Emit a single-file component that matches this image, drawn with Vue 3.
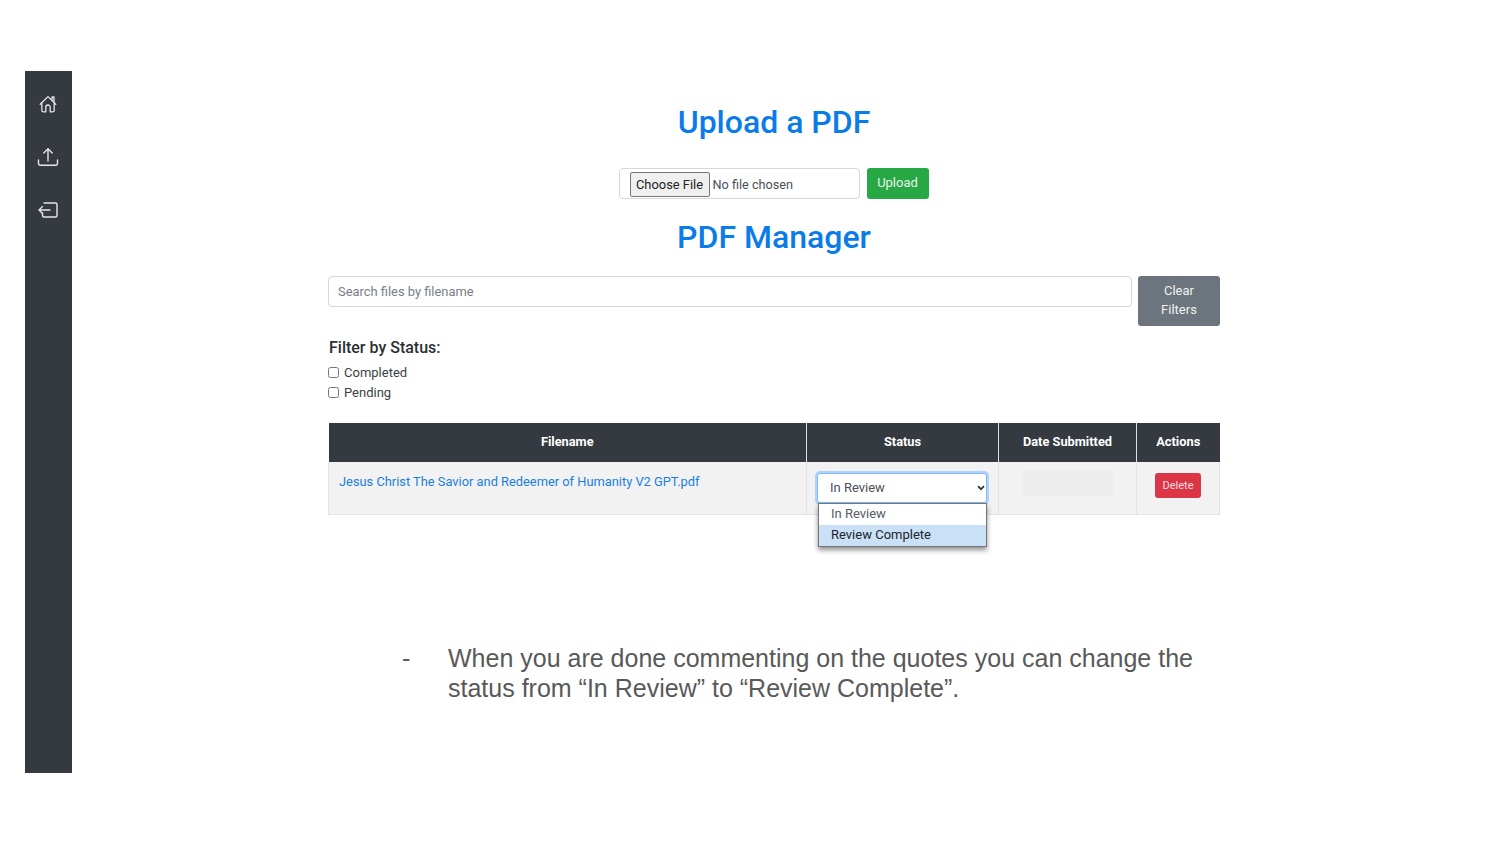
<template>
  <div class="slide">
    <aside class="sidebar">
      <a class="side-icon" aria-label="Home">
        <svg width="20" height="20" viewBox="0 0 20 20" fill="none" stroke="currentColor" stroke-width="1.3" stroke-linejoin="round" stroke-linecap="round">
          <path d="M2.2 10.2 10 2.6l7.8 7.6" />
          <path d="M3.8 9v7.2a1.6 1.6 0 0 0 1.6 1.6h2.400v-4.600a2.200 2.200 0 0 1 4.400 0v4.600h2.400a1.600 1.600 0 0 0 1.600-1.600V9" />
          <path d="M14 3v3.200M14 3h2v5" />
        </svg>
      </a>
      <a class="side-icon" aria-label="Upload">
        <svg width="22" height="20" viewBox="0 0 22 20" fill="none" stroke="currentColor" stroke-width="1.400" stroke-linecap="round" stroke-linejoin="round">
          <path d="M11 14V2M6.800 6 11 1.800 15.200 6" />
          <path d="M1.500 13v3.200a2 2 0 0 0 2 2h15a2 2 0 0 0 2-2V13" />
        </svg>
      </a>
      <a class="side-icon" aria-label="Log out">
        <svg width="20" height="16" viewBox="0 0 20 16" fill="none" stroke="currentColor" stroke-width="1.400" stroke-linecap="round" stroke-linejoin="round">
          <path d="M6 1h11.500a1.500 1.500 0 0 1 1.500 1.500v11a1.500 1.500 0 0 1-1.500 1.500H6a1.500 1.500 0 0 1-1.500-1.500V11" />
          <path d="M12 8H1M4.500 4.500 1 8l3.500 3.500" />
        </svg>
      </a>
    </aside>

    <main class="main">
      <div class="panel">
        <h1 class="title first">Upload a PDF</h1>
        <form class="upload" @submit.prevent>
          <div class="file-box">
            <span class="file-btn">Choose File</span>
            <span class="file-name">No file chosen</span>
          </div>
          <button class="btn btn-green" type="submit">Upload</button>
        </form>

        <h1 class="title second">PDF Manager</h1>

        <div class="search-row">
          <input class="search" type="text" placeholder="Search files by filename">
          <button class="btn btn-grey" type="button">Clear Filters</button>
        </div>

        <h2 class="filter-title">Filter by Status:</h2>
        <label v-for="s in statuses" :key="s" class="check">
          <input type="checkbox">
          <span>{{ s }}</span>
        </label>

        <table class="files">
          <thead>
            <tr>
              <th class="c-name">Filename</th>
              <th class="c-status">Status</th>
              <th class="c-date">Date Submitted</th>
              <th class="c-act">Actions</th>
            </tr>
          </thead>
          <tbody>
            <tr>
              <td class="file-link"><a>Jesus Christ The Savior and Redeemer of Humanity V2 GPT.pdf</a></td>
              <td class="status-cell">
                <div class="select">
                  <span>In Review</span>
                  <svg width="8" height="6" viewBox="0 0 8 6" fill="none" stroke="#333" stroke-width="1.700"><path d="M1 1.200 4 4.200l3-3" /></svg>
                  <ul class="options">
                    <li v-for="o in options" :key="o" :class="{ hover: o === 'Review Complete' }">{{ o }}</li>
                  </ul>
                </div>
              </td>
              <td class="date-cell"><div class="date-blank"></div></td>
              <td class="act-cell"><button class="btn btn-red" type="button">Delete</button></td>
            </tr>
          </tbody>
        </table>
      </div>

      <div class="note">
        <span class="dash">-</span>
        <p>When you are done commenting on the quotes you can change the status from “In Review” to “Review Complete”.</p>
      </div>
    </main>
  </div>
</template>

<script setup>
const statuses = ['Completed', 'Pending']
const options = ['In Review', 'Review Complete']
</script>

<style>
html, body { background: #fff; }
</style>

<style scoped>
.slide {
  width: 1500px; height: 844px; box-sizing: border-box; padding: 71px 0 0 25px;
  display: flex; align-items: flex-start; overflow: hidden;
  font-family: Roboto, "Liberation Sans", sans-serif; color: #212529;
}
.sidebar {
  width: 47px; height: 702px; background: #343a40; flex: none;
  display: flex; flex-direction: column; align-items: center; padding: 22.500px 2px 0 0; box-sizing: border-box;
}
.side-icon { height: 20px; margin-bottom: 33px; color: #e6e6e6; display: flex; align-items: center; }
.main { padding-left: 256px; width: 892px; }
.panel { width: 892px; }
.title {
  margin: 0; text-align: center; color: #0a7cea; font-weight: 500; font-size: 32px; line-height: 38px;
}
.title.first { padding-top: 32px; }
.title.second { margin-top: 19px; }
.upload { display: flex; justify-content: center; gap: 7px; margin-top: 27px; padding-right: 1px; }
.file-box {
  width: 241px; height: 31px; box-sizing: border-box; border: 1px solid #d4d8dc; border-radius: 4px;
  display: flex; align-items: center; padding-left: 10px; font-size: 12.700px; color: #495057;
}
.file-btn {
  width: 80px; height: 25px; box-sizing: border-box; border: 1px solid #767676; border-radius: 2px; background: #efefef;
  color: #222; font-size: 12.900px; display: flex; align-items: center; justify-content: center; margin-right: 3px; margin-top: 2px;
}
.file-name { margin-top: 2px; }
.btn { border: 0; border-radius: 3px; color: #fff; font-family: inherit; padding: 0; }
.btn-green { width: 62px; height: 31px; background: #28a745; font-size: 13px; padding-bottom: 2px; color: #e8f5eb; }
.search-row { display: flex; align-items: flex-start; gap: 6px; margin-top: 20px; }
.search {
  width: 804px; height: 31px; box-sizing: border-box; border: 1px solid #d4d8dc; border-radius: 4px; padding: 0 9px;
  font-family: inherit; font-size: 12.900px; outline: 0;
}
.search::placeholder { color: #777e85; opacity: 1; }
.btn-grey { width: 82px; height: 50px; background: #6c757d; font-size: 13px; line-height: 19px; padding: 0 14px 2px; color: #f0f1f2; }
.filter-title { margin: 12px 0 0 1px; font-size: 16px; font-weight: 500; line-height: 20px; color: #2b2f33; }
.check { display: flex; align-items: center; height: 20px; font-size: 13px; color: #3a3f44; }
.check:first-of-type { margin-top: 4px; }
.check input { margin: 1px 5px 0 0; width: 11px; height: 11px; }
.files {
  width: 891px; margin-top: 21px; border-collapse: collapse; table-layout: fixed; font-size: 13px;
}
.files th {
  height: 39px; padding: 0 0 2px; background: #343a40; color: #fff; font-weight: 700; font-size: 12.800px;
  border-left: 1px solid #dee2e6; text-align: center; box-sizing: border-box;
}
.files th:first-child { border-left: 0; }
.c-name { width: 478px; }
.c-status { width: 192px; }
.c-date { width: 138px; }
.c-act { width: 83px; }
.files td {
  height: 52px; padding: 0; background: #f2f2f2; border-left: 1px solid #e2e4e6; border-bottom: 1px solid #e4e4e4;
  vertical-align: top; box-sizing: border-box;
}
.files td:first-child { border-left: 1px solid #e4e4e4; }
.files td:last-child { border-right: 1px solid #e4e4e4; }
.file-link { padding: 12px 0 0 10px !important; color: #1a7fdd; font-size: 12.850px; line-height: 16px; }
.select {
  position: relative; margin: 11px 0 0 10px; width: 170px; height: 30px; box-sizing: border-box;
  background: #fff; border: 1px solid #80bdff; border-radius: 3px; box-shadow: 0 0 0 2px rgba(128,189,255,.6);
  display: flex; align-items: center; justify-content: space-between; padding: 0 1px 2px 12px;
  font-size: 13px; color: #495057;
}
.select svg { margin-top: 2px; }
.options {
  position: absolute; left: 0; top: 29px; width: 169px; box-sizing: border-box; margin: 0; padding: 0; list-style: none;
  background: #fff; border: 1px solid #767676; box-shadow: 0 3px 5px rgba(0,0,0,.45); z-index: 2;
}
.options li { height: 21px; line-height: 20px; padding-left: 12px; color: #555c63; font-size: 13px; }
.options li.hover { background: #c9e0f7; color: #212529; }
.date-blank { width: 91px; height: 26px; margin: 8px 0 0 24px; background: #ededed; }
.act-cell { text-align: center; }
.btn-red { width: 46px; height: 25px; margin-top: 11px; background: #dc3545; font-size: 11px; color: #f9dfe2; }
.note {
  display: flex; align-items: flex-start; width: 800px; margin: 128px 0 0 74px;
  font-family: "Liberation Sans", Arial, sans-serif; font-size: 25px; line-height: 30px; color: #595959;
}
.dash { width: 46px; flex: none; }
.note p { margin: 0; width: 760px; }
</style>
